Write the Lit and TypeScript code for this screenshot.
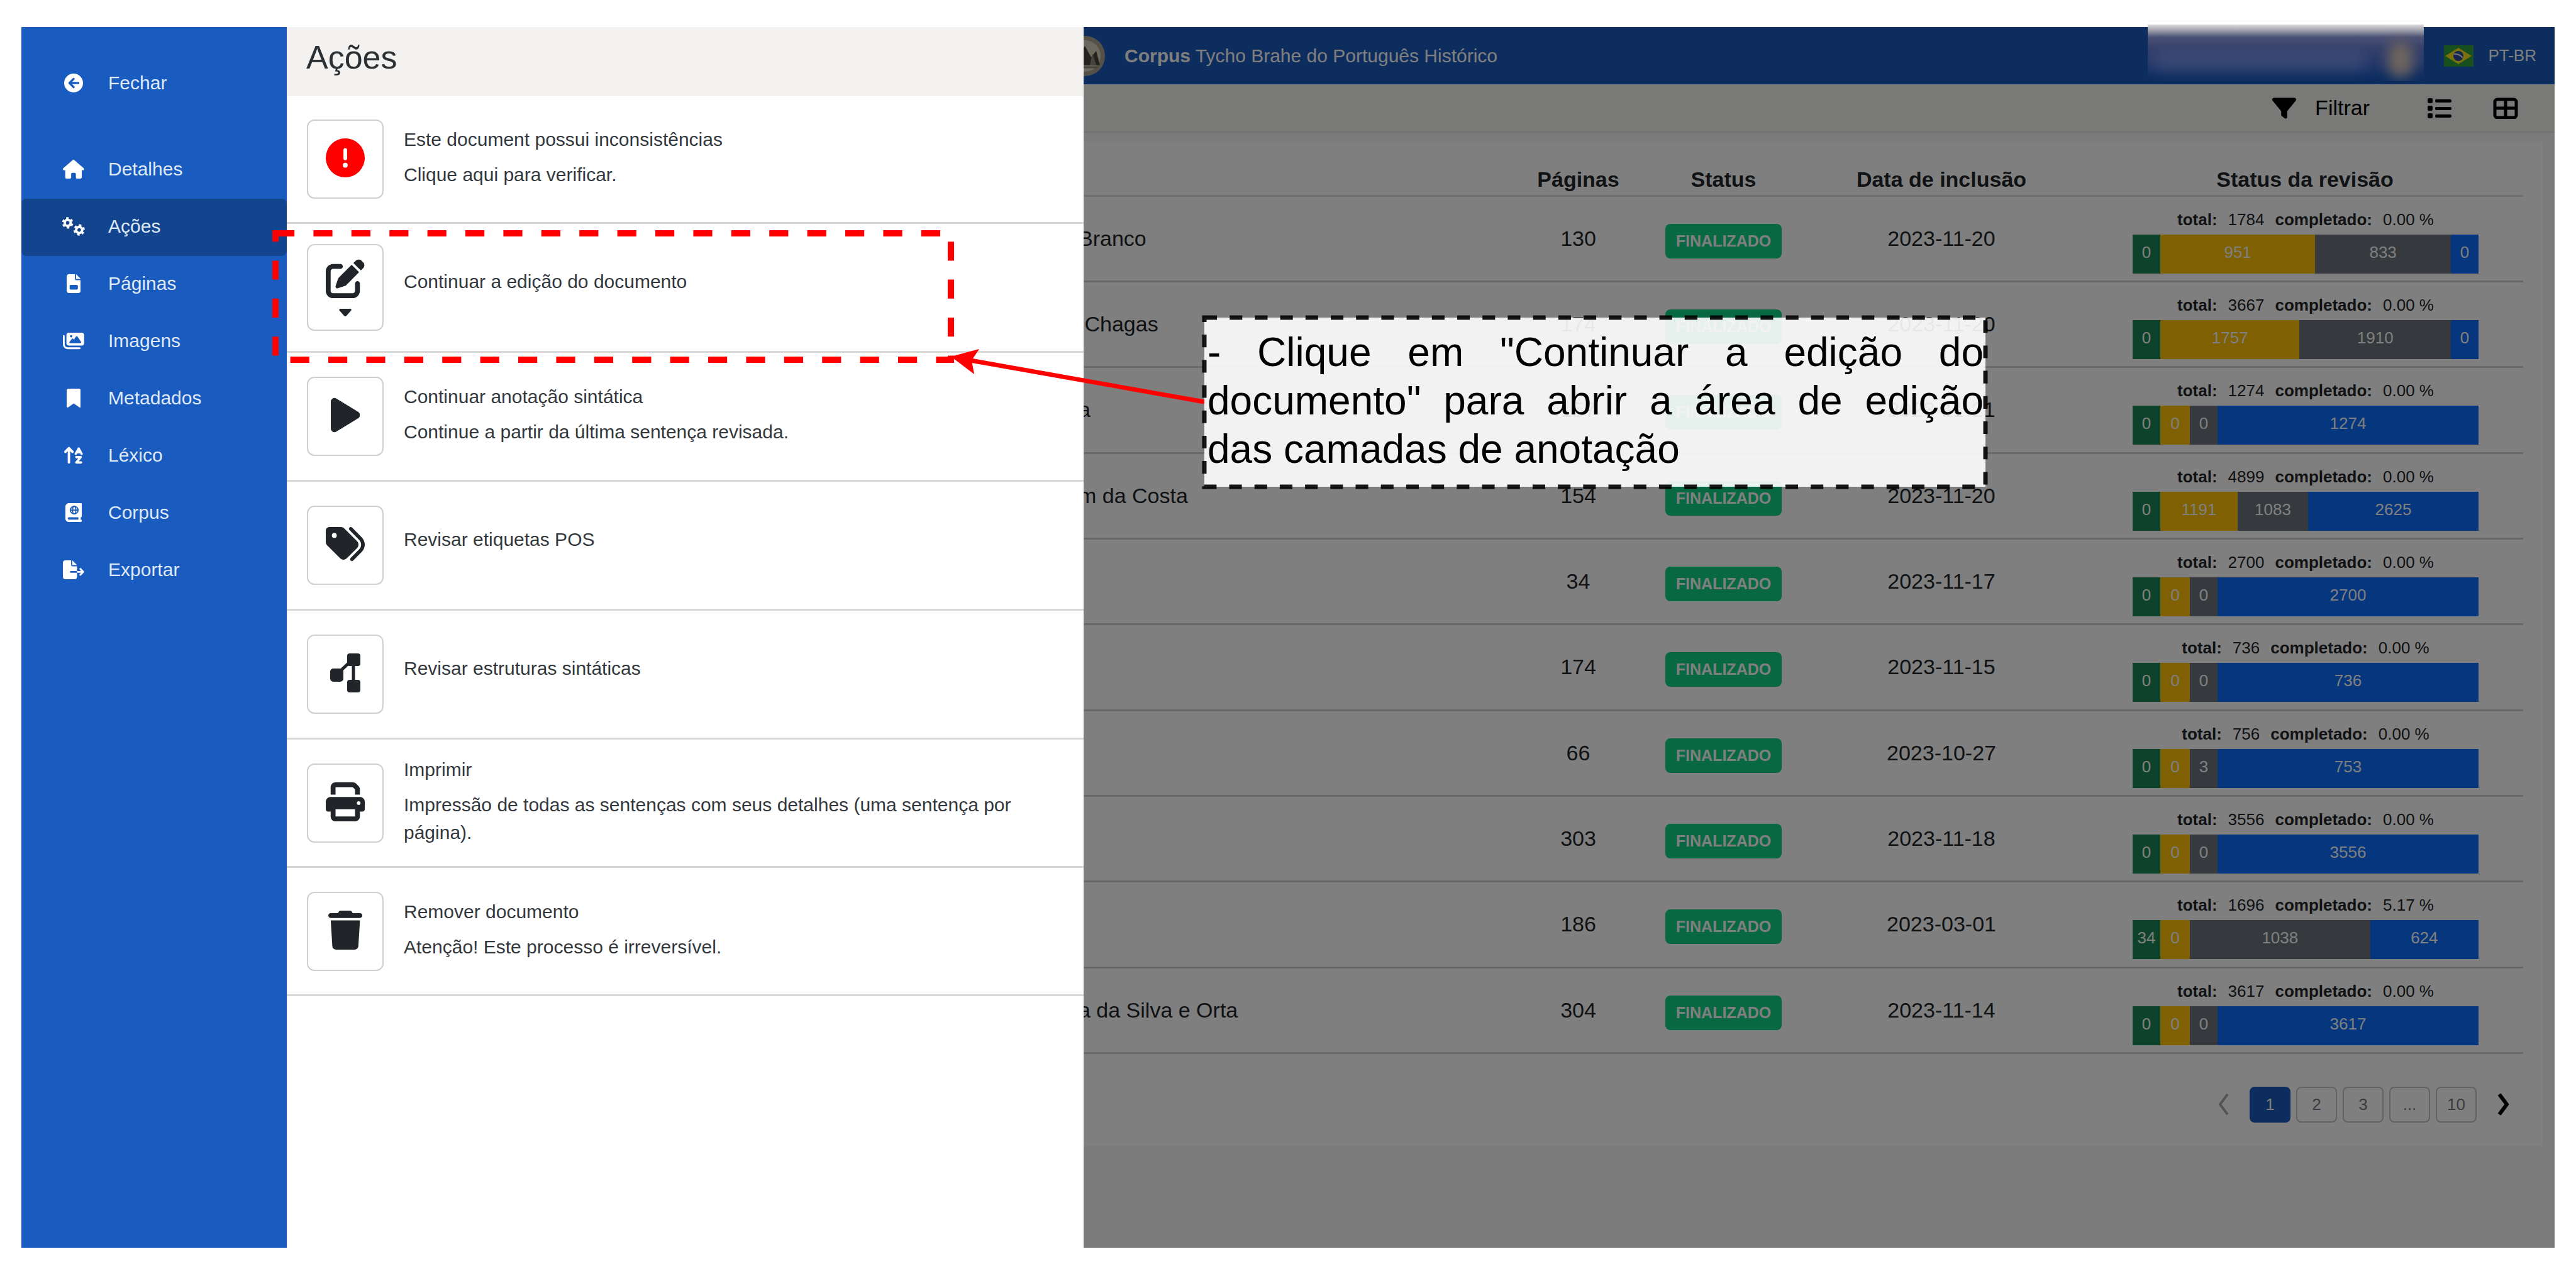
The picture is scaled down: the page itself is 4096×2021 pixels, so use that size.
import { LitElement, html, css, svg, nothing, TemplateResult } from "lit";
import { customElement, state } from "lit/decorators.js";
import { styleMap } from "lit/directives/style-map.js";
import { classMap } from "lit/directives/class-map.js";

interface Glyph {
  w: number;
  h: number;
  body: TemplateResult<2>;
}

const glyph = (w: number, h: number, body: TemplateResult<2>): Glyph => ({ w, h, body });
const solid = (w: number, h: number, d: string): Glyph => glyph(w, h, svg`<path fill="currentColor" d=${d}></path>`);

const gear = (cx: number, cy: number, turn: number) => svg`
  <g fill="none" stroke="currentColor" transform=${`rotate(${turn} ${cx} ${cy})`}>
    <circle cx=${cx} cy=${cy} r="82" stroke-width="66"></circle>
    <circle cx=${cx} cy=${cy} r="130" stroke-width="48" pathLength="120" stroke-dasharray="10 10"></circle>
  </g>`;

const ICONS: Record<string, Glyph> = {
  back: glyph(512, 512, svg`
    <circle cx="256" cy="256" r="256" fill="currentColor"></circle>
    <path d="M385 256H150M256 145L145 256L256 367" fill="none" stroke="#1a5bbf" stroke-width="58" stroke-linecap="round" stroke-linejoin="round"></path>`),
  house: solid(576, 512, "M575.8 255.5c0 18-15 32.1-32 32.1l-32 0 .7 160.2c0 2.7-.2 5.4-.5 8.1l0 16.2c0 22.1-17.9 40-40 40l-16 0c-1.1 0-2.2 0-3.3-.1c-1.4 .1-2.8 .1-4.2 .1L416 512l-24 0c-22.1 0-40-17.9-40-40l0-24 0-64c0-17.7-14.3-32-32-32l-64 0c-17.7 0-32 14.3-32 32l0 64 0 24c0 22.1-17.9 40-40 40l-24 0-31.9 0c-1.5 0-3-.1-4.5-.2c-1.2 .1-2.4 .2-3.6 .2l-16 0c-22.1 0-40-17.9-40-40l0-112c0-.9 0-1.9 .1-2.8l0-69.7-32 0c-18 0-32-14-32-32.1c0-9 3-17 10-24L266.4 8c7-7 15-8 22-8s15 2 21 7L564.8 231.5c8 7 12 15 11 24z"),
  gears: glyph(640, 512, svg`${gear(164, 160, 10)}${gear(476, 352, 25)}`),
  file: solid(384, 512, "M64 0C28.7 0 0 28.7 0 64V448c0 35.3 28.7 64 64 64H320c35.3 0 64-28.7 64-64V160H256c-17.7 0-32-14.3-32-32V0H64zM256 0V128H384L256 0zM112 288H272c18 0 32 14 32 32v64c0 18-14 32-32 32H112c-18 0-32-14-32-32v-64c0-18 14-32 32-32z"),
  images: solid(576, 512, "M160 32c-35.3 0-64 28.7-64 64V320c0 35.3 28.7 64 64 64H512c35.3 0 64-28.7 64-64V96c0-35.3-28.7-64-64-64H160zM396 138.7l96 144c4.9 7.4 5.4 16.8 1.2 24.6S480.9 320 472 320H328 280 200c-9.2 0-17.6-5.3-21.6-13.6s-2.9-18.2 2.9-25.4l64-80c4.6-5.7 11.4-9 18.7-9s14.2 3.3 18.7 9l17.3 21.6 56-84C360.5 132 368 128 376 128s15.5 4 20 10.7zM192 128a32 32 0 1 1 64 0 32 32 0 1 1 -64 0zM48 120c0-13.3-10.7-24-24-24S0 106.7 0 120V344c0 75.1 60.9 136 136 136H456c13.3 0 24-10.7 24-24s-10.7-24-24-24H136c-48.6 0-88-39.4-88-88V120z"),
  bookmark: solid(384, 512, "M0 48V487.7C0 501.1 10.9 512 24.3 512c5 0 9.9-1.5 14-4.4L192 400 345.7 507.6c4.1 2.9 9 4.4 14 4.4c13.4 0 24.3-10.9 24.3-24.3V48c0-26.5-21.5-48-48-48H48C21.5 0 0 21.5 0 48z"),
  sort: glyph(512, 512, svg`
    <g fill="none" stroke="currentColor" stroke-width="66" stroke-linecap="round" stroke-linejoin="round">
      <path d="M130 450V80M34 160L130 62L226 160"></path>
      <path d="M315 216L395 70L475 216M345 175H445" stroke-width="60"></path>
      <path d="M330 305H450L330 450H460" stroke-width="60"></path>
    </g>`),
  atlas: glyph(448, 512, svg`
    <path fill="currentColor" d="M0 96C0 43 43 0 96 0H384h32c17.7 0 32 14.3 32 32V352c0 17.7-14.3 32-32 32v64c17.7 0 32 14.3 32 32s-14.3 32-32 32H384 96c-53 0-96-43-96-96V96zM64 416c0 17.7 14.3 32 32 32H352V384H96c-17.7 0-32 14.3-32 32z"></path>
    <g fill="none" stroke="#1a5bbf" stroke-width="30">
      <circle cx="240" cy="190" r="104"></circle>
      <ellipse cx="240" cy="190" rx="44" ry="104"></ellipse>
      <path d="M136 190H344"></path>
    </g>`),
  exportFile: solid(576, 512, "M0 64C0 28.7 28.7 0 64 0H224V128c0 17.7 14.3 32 32 32H384V288H216c-13.3 0-24 10.7-24 24s10.7 24 24 24H384V448c0 35.3-28.7 64-64 64H64c-35.3 0-64-28.7-64-64V64zM384 336V288H494.1l-39-39c-9.4-9.4-9.4-24.6 0-33.9s24.6-9.4 33.9 0l80 80c9.4 9.4 9.4 24.6 0 33.9l-80 80c-9.4 9.4-24.6 9.4-33.9 0s-9.4-24.6 0-33.9l39-39H384zm0-208H256V0L384 128z"),
  alert: solid(512, 512, "M256 512A256 256 0 1 0 256 0a256 256 0 1 0 0 512zm0-384c13.3 0 24 10.7 24 24V264c0 13.3-10.7 24-24 24s-24-10.7-24-24V152c0-13.3 10.7-24 24-24zM224 352a32 32 0 1 1 64 0 32 32 0 1 1 -64 0z"),
  edit: solid(512, 512, "M471.6 21.7c-21.9-21.9-57.3-21.9-79.2 0L362.3 51.7l97.9 97.9 30.1-30.1c21.9-21.9 21.9-57.3 0-79.2L471.6 21.7zm-299.2 220c-6.1 6.1-10.8 13.6-13.5 21.9l-29.6 88.8c-2.9 8.6-.6 18.1 5.8 24.6s15.9 8.7 24.6 5.8l88.8-29.6c8.2-2.7 15.7-7.4 21.9-13.5L437.7 172.3 339.7 74.3 172.4 241.7zM96 64C43 64 0 107 0 160V416c0 53 43 96 96 96H352c53 0 96-43 96-96V320c0-17.7-14.3-32-32-32s-32 14.3-32 32v96c0 17.7-14.3 32-32 32H96c-17.7 0-32-14.3-32-32V160c0-17.7 14.3-32 32-32h96c17.7 0 32-14.3 32-32s-14.3-32-32-32H96z"),
  play: solid(384, 512, "M73 39c-14.8-9.1-33.4-9.4-48.5-.9S0 62.6 0 80V432c0 17.4 9.4 33.4 24.5 41.9s33.7 8.1 48.5-.9L361 297c14.3-8.7 23-24.2 23-41s-8.7-32.2-23-41L73 39z"),
  tags: solid(512, 512, "M345 39.1L472.8 168.4c52.4 53 52.4 138.2 0 191.2L360.8 472.9c-9.3 9.4-24.5 9.5-33.9 .2s-9.5-24.5-.2-33.9L438.6 325.9c33.9-34.3 33.9-89.4 0-123.7L310.9 72.9c-9.3-9.4-9.2-24.6 .2-33.9s24.6-9.2 33.9 .2zM0 229.5V80C0 53.5 21.5 32 48 32H197.5c17 0 33.3 6.7 45.3 18.7l168 168c25 25 25 65.5 0 90.5L277.3 442.7c-25 25-65.5 25-90.5 0l-168-168C6.7 262.7 0 246.5 0 229.5zM144 144a32 32 0 1 0 -64 0 32 32 0 1 0 64 0z"),
  tree: glyph(48, 62, svg`
    <g fill="currentColor">
      <rect x="0" y="24" width="21" height="21" rx="5"></rect>
      <rect x="27" y="0" width="21" height="20" rx="4"></rect>
      <rect x="27" y="42" width="21" height="20" rx="4"></rect>
    </g>
    <path d="M12 32L33 12M37 12V50" fill="none" stroke="currentColor" stroke-width="5"></path>`),
  print: solid(512, 512, "M128 0C92.7 0 64 28.7 64 64v96h64V64H354.7L384 93.3V160h64V93.3c0-17-6.7-33.3-18.7-45.3L400 18.7C388 6.7 371.7 0 354.7 0H128zM384 352v32 64H128V384 368 352H384zm64 32h32c17.7 0 32-14.3 32-32V256c0-35.3-28.7-64-64-64H64c-35.3 0-64 28.7-64 64v96c0 17.7 14.3 32 32 32H64v64c0 35.3 28.7 64 64 64H384c35.3 0 64-28.7 64-64V384zM432 248a24 24 0 1 1 0 48 24 24 0 1 1 0-48z"),
  trash: solid(448, 512, "M135.2 17.7L128 32H32C14.3 32 0 46.3 0 64S14.3 96 32 96H416c17.7 0 32-14.3 32-32s-14.3-32-32-32H320l-7.2-14.3C307.4 6.8 296.3 0 284.2 0H163.8c-12.1 0-23.2 6.8-28.6 17.7zM416 128H32L53.2 467c1.6 25.3 22.6 45 47.9 45H346.9c25.3 0 46.3-19.7 47.9-45L416 128z"),
  caret: solid(20, 12, "M2 0H18Q21 1 19 3L12 11Q10 13 8 11L1 3Q-1 1 2 0Z"),
  filter: solid(512, 448, "M3.9 22.9C10.5 8.9 24.5 0 40 0H472c15.5 0 29.5 8.9 36.1 22.9s4.6 30.5-5.2 42.5L320 288.9V416c0 12.1-6.8 23.2-17.7 28.6s-23.8 4.3-33.5-3l-64-48c-8.1-6-12.8-15.5-12.8-25.6V288.9L9 65.3C-.7 53.4-2.8 36.8 3.9 22.9z"),
  list: glyph(38, 34, svg`
    <g fill="currentColor">
      <rect x="0" y="1" width="8" height="8" rx="2"></rect><rect x="0" y="13" width="8" height="8" rx="2"></rect><rect x="0" y="25" width="8" height="8" rx="2"></rect>
      <rect x="12" y="3" width="26" height="5" rx="2"></rect><rect x="12" y="15" width="26" height="5" rx="2"></rect><rect x="12" y="27" width="26" height="5" rx="2"></rect>
    </g>`),
  cells: glyph(40, 34, svg`
    <g fill="none" stroke="currentColor" stroke-width="5">
      <rect x="3" y="3" width="34" height="29" rx="4"></rect>
      <path d="M20 3V32M3 17H37"></path>
    </g>`),
  prev: glyph(18, 36, svg`<path d="M15 2L3 18L15 34" fill="none" stroke="currentColor" stroke-width="4"></path>`),
  next: glyph(18, 36, svg`<path d="M3 2L15 18L3 34" fill="none" stroke="currentColor" stroke-width="6"></path>`),
  flag: glyph(47, 34, svg`
    <rect width="47" height="34" fill="#2f9e3c"></rect>
    <path d="M23 4L44 17L23 30L2 17Z" fill="#f7e017"></path>
    <circle cx="23" cy="17" r="8" fill="#2b4a9f"></circle>
    <path d="M16 14Q24 13 30 20" fill="none" stroke="#dfe6ee" stroke-width="2"></path>`),
  seal: glyph(64, 64, svg`
    <circle cx="32" cy="32" r="32" fill="#aaa38f"></circle>
    <circle cx="32" cy="32" r="25" fill="#d9d2bd"></circle>
    <path d="M14 47L32 16L42 34L50 24L56 47Z" fill="#49443c"></path>
    <path d="M40 47L44 28L50 46Z" fill="#8f8979"></path>
    <path d="M12 50H52" stroke="#8b8473" stroke-width="3"></path>`),
};

const icon = (name: string, cls = "") => {
  const g = ICONS[name];
  return html`<svg class=${`icon ${cls}`} viewBox=${`0 0 ${g.w} ${g.h}`} aria-hidden="true">${g.body}</svg>`;
};

const NAV = [
  ["house", "Detalhes"],
  ["gears", "Ações"],
  ["file", "Páginas"],
  ["images", "Imagens"],
  ["bookmark", "Metadados"],
  ["sort", "Léxico"],
  ["atlas", "Corpus"],
  ["exportFile", "Exportar"],
];

const ACTIONS: { icon: string; title: string; text?: string; tone?: string; menu?: boolean }[] = [
  { icon: "alert", title: "Este document possui inconsistências", text: "Clique aqui para verificar.", tone: "danger" },
  { icon: "edit", title: "Continuar a edição do documento", menu: true },
  { icon: "play", title: "Continuar anotação sintática", text: "Continue a partir da última sentença revisada." },
  { icon: "tags", title: "Revisar etiquetas POS" },
  { icon: "tree", title: "Revisar estruturas sintáticas" },
  { icon: "print", title: "Imprimir", text: "Impressão de todas as sentenças com seus detalhes (uma sentença por página)." },
  { icon: "trash", title: "Remover documento", text: "Atenção! Este processo é irreversível." },
];

interface Row {
  name: string;
  pages: number;
  date: string;
  total: number;
  done: string;
  parts: number[];
}

const row = (name: string, pages: number, date: string, total: number, done: string, ...parts: number[]): Row =>
  ({ name, pages, date, total, done, parts });

const ROWS: Row[] = [
  row("Branco", 130, "2023-11-20", 1784, "0.00 %", 0, 951, 833, 0),
  row(" Chagas", 174, "2023-11-20", 3667, "0.00 %", 0, 1757, 1910, 0),
  row("a", 157, "2023-11-21", 1274, "0.00 %", 0, 0, 0, 1274),
  row("m da Costa", 154, "2023-11-20", 4899, "0.00 %", 0, 1191, 1083, 2625),
  row("", 34, "2023-11-17", 2700, "0.00 %", 0, 0, 0, 2700),
  row("", 174, "2023-11-15", 736, "0.00 %", 0, 0, 0, 736),
  row("", 66, "2023-10-27", 756, "0.00 %", 0, 0, 3, 753),
  row("", 303, "2023-11-18", 3556, "0.00 %", 0, 0, 0, 3556),
  row("", 186, "2023-03-01", 1696, "5.17 %", 34, 0, 1038, 624),
  row("a da Silva e Orta", 304, "2023-11-14", 3617, "0.00 %", 0, 0, 0, 3617),
];

const base = css`
  * { box-sizing: border-box; }
  :host { font-family: "Liberation Sans", Arial, sans-serif; color: #212529; }
  button { font: inherit; color: inherit; background: none; border: 0; padding: 0; margin: 0; cursor: pointer; }
  a { color: inherit; text-decoration: none; }
  h1, h2, p { margin: 0; font-weight: 400; }
  .icon { display: block; flex: none; }
`;

@customElement("doc-sidebar")
class DocSidebar extends LitElement {
  @state() private active = "Ações";

  static styles = [base, css`
    :host { display: block; background: #1a5bbf; color: #dfe9f8; font-size: 30px; }
    nav { display: flex; flex-direction: column; padding-top: 45px; }
    .entry { display: flex; align-items: center; gap: 34px; height: 91px; padding: 0 16px 4px 62px; border-radius: 8px; width: 100%; }
    .close { margin-bottom: 46px; }
    .active { background: #13458f; }
    .slot { display: flex; justify-content: center; width: 42px; color: #fff; }
    .icon { height: 30px; }
  `];

  render() {
    return html`
      <nav>
        <button class="entry close">
          <span class="slot">${icon("back")}</span>Fechar
        </button>
        ${NAV.map(([ic, label]) => html`
          <a href="#" class=${classMap({ entry: true, active: label === this.active })}
            @click=${(e: Event) => { e.preventDefault(); this.active = label; }}>
            <span class="slot">${icon(ic)}</span>${label}
          </a>`)}
      </nav>`;
  }
}

@customElement("actions-panel")
class ActionsPanel extends LitElement {
  static styles = [base, css`
    :host { display: block; background: #fff; font-size: 30px; }
    h2 { height: 110px; padding: 16px 31px 0; background: #f3f2f0; font-size: 52px; line-height: 64px; color: #2b3035; }
    ul { list-style: none; margin: 0; padding: 0; }
    li { display: flex; align-items: center; gap: 32px; height: 205px; padding: 0 32px; border-bottom: 3px solid #dad9d6; }
    li:first-child { height: 203px; }
    li:nth-last-child(-n + 2) { height: 204px; }
    .act { flex: none; display: flex; flex-direction: column; align-items: center; justify-content: center; gap: 17px;
      width: 122px; height: 126px; padding-bottom: 4px; border: 2px solid #d0cfcc; border-radius: 12px; }
    .tall { height: 138px; padding-bottom: 0; }
    .act .icon { height: 62px; }
    .act .caret { height: 12px; }
    .danger { color: #f00; }
    .copy { display: flex; flex-direction: column; gap: 12px; padding-bottom: 6px; line-height: 44px; color: #33383d; }
    .lead { padding-bottom: 12px; }
  `];

  render() {
    return html`
      <h2>Ações</h2>
      <ul>
        ${ACTIONS.map((a) => html`
          <li>
            <button aria-label=${a.title}
              class=${classMap({ act: true, danger: a.tone === "danger", tall: !!a.menu })}>
              ${icon(a.icon)}${a.menu ? icon("caret", "caret") : nothing}
            </button>
            <div class="copy">
              <p class=${a.text ? "" : "lead"}>${a.title}</p>
              ${a.text ? html`<p>${a.text}</p>` : nothing}
            </div>
          </li>`)}
      </ul>`;
  }
}

@customElement("review-bar")
class ReviewBar extends LitElement {
  static properties = { data: { attribute: false } };
  declare data: Row;

  static styles = [base, css`
    :host { display: block; font-size: 26px; }
    .sum { display: flex; justify-content: center; gap: 17px; line-height: 40px; margin-bottom: 4px; }
    .bar { display: flex; height: 62px; color: #fff; }
    .part { display: flex; align-items: center; justify-content: center; min-width: 44px; flex-shrink: 0; flex-basis: 0; padding-bottom: 4px; }
    .p0 { background: #198754; }
    .p1 { background: #ffc107; min-width: 47px; }
    .p2 { background: #6c757d; }
    .p3 { background: #0d6efd; }
  `];

  render() {
    const d = this.data;
    return html`
      <div class="sum"><b>total:</b><span>${d.total}</span><b>completado:</b><span>${d.done}</span></div>
      <div class="bar">
        ${d.parts.map((n, i) => html`<span class=${`part p${i}`} style=${styleMap({ flexGrow: String(n) })}>${n}</span>`)}
      </div>`;
  }
}

@customElement("corpus-table")
class CorpusTable extends LitElement {
  @state() private page = "1";

  static styles = [base, css`
    :host { display: block; background: #fff; padding: 0 31px 37px 0; font-size: 34px; }
    table { width: 100%; table-layout: fixed; border-collapse: collapse; }
    .num, .stat { width: 231px; }
    .date { width: 462px; }
    .rev { width: 694px; }
    th { height: 86px; padding: 36px 0 0; font-weight: 700; text-align: center; vertical-align: middle; border-bottom: 3px solid #dedcd9; }
    td { height: 136px; padding: 0; text-align: center; vertical-align: middle; border-bottom: 3px solid #d3d1cc; }
    tr:nth-child(3n) td { height: 137px; }
    .name { text-align: left; text-indent: -8px; white-space: pre; }
    .review { padding: 16px 71px 0 73px; vertical-align: top; }
    .badge { display: inline-block; width: 185px; margin-top: 8px; border-radius: 8px; background: #10d085; color: #fff; font-size: 25px; font-weight: 700; line-height: 55px; vertical-align: middle; }
    .pager { display: flex; justify-content: flex-end; gap: 9px; padding-top: 52px; font-size: 26px; color: #73787d; }
    .pager button { display: flex; align-items: center; justify-content: center; width: 65px; height: 57px; border: 2px solid #c2c4c6; border-radius: 8px; }
    .pager .step { border-color: transparent; color: #000; }
    .pager .dim { color: #a5a8ab; }
    .pager .on { background: #1a5bbf; border-color: #1a5bbf; color: #fff; }
    .step .icon { height: 36px; }
  `];

  render() {
    return html`
      <table>
        <thead>
          <tr>
            <th></th>
            <th class="num">Páginas</th>
            <th class="stat">Status</th>
            <th class="date">Data de inclusão</th>
            <th class="rev">Status da revisão</th>
          </tr>
        </thead>
        <tbody>
          ${ROWS.map((r) => html`
            <tr>
              <td class="name">${r.name}</td>
              <td>${r.pages}</td>
              <td><span class="badge">FINALIZADO</span></td>
              <td>${r.date}</td>
              <td class="review"><review-bar .data=${r}></review-bar></td>
            </tr>`)}
        </tbody>
      </table>
      <div class="pager">
        <button class="step dim" aria-label="Anterior">${icon("prev")}</button>
        ${["1", "2", "3", "...", "10"].map((p) => html`
          <button class=${classMap({ on: p === this.page })} @click=${() => { if (p !== "...") this.page = p; }}>${p}</button>`)}
        <button class="step" aria-label="Próxima">${icon("next")}</button>
      </div>`;
  }
}

@customElement("app-root")
class AppRoot extends LitElement {
  static styles = [base, css`
    :host { display: block; position: relative; min-height: 100vh; padding: 43px 34px 37px; background: #fff; overflow: hidden; }
    .window { display: flex; min-height: calc(100vh - 80px); }
    doc-sidebar { flex: 0 0 422px; }
    actions-panel { flex: 0 0 1267px; }
    main { position: relative; flex: 1; min-width: 0; background: #f7f7f7; }
    .view { overflow: hidden; }
    .shade { position: absolute; inset: 0; background: rgba(0, 0, 0, 0.5); }
    header { display: flex; align-items: center; height: 91px; padding-right: 29px; background: #1a5bbf; color: #fff; font-size: 30px; }
    .brand { display: flex; align-items: center; gap: 31px; margin-left: -30px; flex: 1; font-size: 30px; }
    .brand .icon { height: 64px; }
    .lang { display: flex; align-items: center; gap: 23px; font-size: 26px; color: #fff; }
    .lang .icon { height: 34px; }
    .tools { display: flex; align-items: center; justify-content: flex-end; height: 77px; padding: 0 58px 0 0; background: #f3f2f0; border-bottom: 2px solid #e2e1df; color: #000; font-size: 34px; }
    .tools .icon { height: 34px; }
    .filter { display: flex; align-items: center; gap: 30px; margin-right: 92px; }
    .filter .icon { width: 38px; }
    .list { margin-right: 66px; }
    corpus-table { margin: 14px 19px 0 0; }
    .user { position: absolute; top: -4px; right: 208px; width: 439px; height: 90px; overflow: hidden;
      background: linear-gradient(#dcdcde 0, #a9aab2 8px, #4c5276 20px, #35406b 36px, #243769 64px, #0d2d60 84px); }
    .smudge { position: absolute; left: 12px; top: 42px; width: 330px; height: 30px; background: #4f5c82; opacity: 0.5; filter: blur(12px); }
    .face { position: absolute; left: 382px; top: 26px; width: 40px; height: 58px; border-radius: 20px; background: #6d655f; filter: blur(10px); }
    .notes { position: absolute; left: 0; top: 0; width: 100%; height: 100%; pointer-events: none; overflow: visible; }
    .callout { position: absolute; left: 1915px; top: 505px; width: 1243px; height: 269px; padding: 17px 4px 0 5px; color: #000; font-size: 64px; line-height: 77px; text-align: justify; }
  `];

  render() {
    return html`
      <div class="window">
        <doc-sidebar></doc-sidebar>
        <actions-panel></actions-panel>
        <main>
          <div class="view">
            <header>
              <h1 class="brand">${icon("seal")}<span class="title"><b>Corpus</b> Tycho Brahe do Português Histórico</span></h1>
              <button class="lang">${icon("flag")}PT-BR</button>
            </header>
            <div class="tools">
              <button class="filter">${icon("filter")}Filtrar</button>
              <button class="list" aria-label="Lista">${icon("list")}</button>
              <button aria-label="Grade">${icon("cells")}</button>
            </div>
            <corpus-table></corpus-table>
          </div>
          <div class="shade"></div>
          <div class="user"><div class="smudge"></div><div class="face"></div></div>
        </main>
      </div>
      <svg class="notes" aria-hidden="true">
        <rect x="438" y="371" width="1074" height="201" fill="none" stroke="#f00" stroke-width="10" stroke-dasharray="30.2"></rect>
        <path d="M1915 639L1543 573" stroke="#f00" stroke-width="7"></path>
        <path d="M1512 567L1557 555L1545 573L1549 595Z" fill="#f00"></path>
        <rect x="1915" y="505" width="1242" height="269" fill="#fff" fill-opacity="0.9" stroke="#000" stroke-opacity="0.9" stroke-width="7" stroke-dasharray="20.1"></rect>
      </svg>
      <p class="callout">- Clique em "Continuar a edição do documento" para abrir a área de edição das camadas de anotação</p>`;
  }
}
